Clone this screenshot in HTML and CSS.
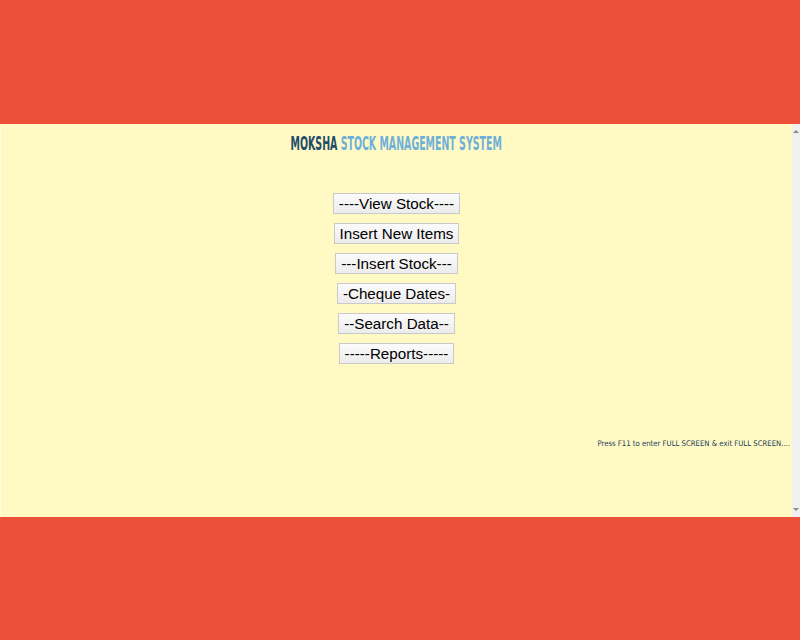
FILE: index.html
```html
<!DOCTYPE html>
<html>
<head>
<meta charset="utf-8">
<title>Moksha Stock Management System</title>
<link rel="stylesheet" href="styles.css">
</head>
<body>
<div class="frame">
  <div class="content">
    <h1 class="title"><span class="title-inner"><span class="brand">MOKSHA</span> <span class="sub">STOCK MANAGEMENT SYSTEM</span></span></h1>
    <div class="menu">
      <button class="btn">----View Stock----</button>
      <button class="btn">Insert New Items</button>
      <button class="btn">---Insert Stock---</button>
      <button class="btn">-Cheque Dates-</button>
      <button class="btn">--Search Data--</button>
      <button class="btn">-----Reports-----</button>
    </div>
    <p class="hint">Press F11 to enter FULL SCREEN &amp; exit FULL SCREEN....</p>
  </div>
  <div class="scrollbar">
    <span class="arrow up"></span>
    <span class="arrow down"></span>
  </div>
</div>
</body>
</html>
```
FILE: styles.css
```css
html, body {
  margin: 0;
  padding: 0;
  background: #ec5039;
  height: 100%;
}
.frame {
  margin-top: 124px;
  height: 393px;
  display: flex;
  background: #fffac4;
  border-left: 1px solid #fffde0;
}
.content {
  flex: 1;
  display: flex;
  flex-direction: column;
  align-items: center;
}
.title {
  margin: 8px 0 0 0;
  font-family: "DejaVu Sans Condensed", "DejaVu Sans", sans-serif;
  font-weight: bold;
  font-size: 20px;
  line-height: 22px;
  white-space: nowrap;
}
.title-inner {
  display: inline-block;
  transform: scaleX(0.525);
}
.brand { color: #1f4d6b; }
.sub { color: #6fb0d9; }
.menu {
  margin-top: 39px;
  display: flex;
  flex-direction: column;
  align-items: center;
  gap: 9px;
}
.btn {
  font-family: "Liberation Sans", Arial, sans-serif;
  font-size: 15.2px;
  line-height: 17px;
  height: 21px;
  padding: 0 5px;
  color: #000;
  background: linear-gradient(#fbfbfb, #ececec);
  border: 1px solid #c9c9c9;
  border-radius: 0;
}
.hint {
  align-self: stretch;
  text-align: right;
  margin: 75px 2px 0 0;
  font-family: "DejaVu Sans Condensed", "DejaVu Sans", sans-serif;
  font-size: 7.7px;
  color: #1d3a58;
}
.scrollbar {
  width: 8px;
  background: #f0f0f0;
  display: flex;
  flex-direction: column;
  justify-content: space-between;
  align-items: center;
  padding: 6px 0;
  box-sizing: border-box;
}
.arrow {
  width: 0;
  height: 0;
  border-left: 3px solid transparent;
  border-right: 3px solid transparent;
}
.arrow.up { border-bottom: 3px solid #8a8a8a; }
.arrow.down { border-top: 3px solid #8a8a8a; }
```
